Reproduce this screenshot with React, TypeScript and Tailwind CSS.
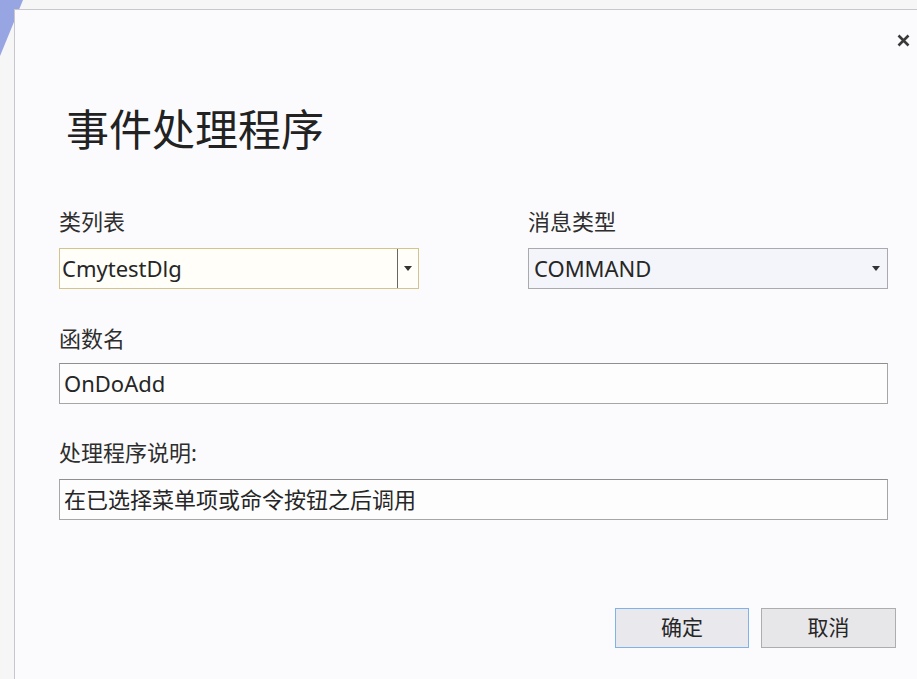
import { ReactNode } from "react";

function Caret() {
    return (
        <svg width="8" height="5" viewBox="0 0 8 5" className="block">
            <path d="M0 0 L8 0 L4 5 Z" fill="#333" />
        </svg>
    );
}

function Label({ children }: { children: ReactNode }) {
    return <div className="text-[22px] leading-[22px] text-[#2e2e2e]">{children}</div>;
}

function TextBox({ value, className = "" }: { value: string; className?: string }) {
    return (
        <div className={`flex h-[41px] w-[829px] items-center border border-[#a6a6a6] border-t-[#8f8f8f] bg-[#fdfdfd] pl-[4px] text-[22px] text-[#262626] ${className}`}>
            {value}
        </div>
    );
}

export default function App() {
    return (
        <div className="relative h-[679px] w-[917px] overflow-hidden bg-[#f6f6f7] pl-[14px] pt-[9px] font-['Noto_Sans','Noto_Sans_CJK_SC',sans-serif]">
            {/* desktop corner peeking out behind the dialog */}
            <svg className="absolute left-0 top-0" width="30" height="60" viewBox="0 0 30 60">
                <polygon points="0,0 23,0 0,56" fill="#97a5e3" />
            </svg>

            <div className="relative flex h-full w-[903px] flex-col border-l border-t border-[#c7c7cc] bg-[#fbfbfd]">
                <div className="flex justify-end pr-[7px] pt-[23px]">
                    <button className="flex h-[14px] w-[14px] items-center justify-center">
                        <svg width="13" height="13" viewBox="0 0 13 13">
                            <path d="M1.5 1.5 L11.5 11.5 M11.5 1.5 L1.5 11.5" stroke="#3a3a3a" strokeWidth="2.6" />
                        </svg>
                    </button>
                </div>

                <div className="pl-[44px]">
                    <h1 className="ml-[7px] mt-[61px] text-[43px] font-normal leading-[43px] text-[#222]">事件处理程序</h1>

                    <div className="mt-[59px] grid w-[829px] grid-cols-[360px_360px] gap-x-[109px]">
                        <div>
                            <Label>类列表</Label>
                            <div className="mt-[16px] flex h-[41px] border border-[#d3c48e] bg-[#fffef8]">
                                <div className="flex flex-1 items-center pl-[2px] text-[22px] text-[#262626]">CmytestDlg</div>
                                <div className="flex w-[21px] items-center justify-center border-l border-[#666]">
                                    <Caret />
                                </div>
                            </div>
                        </div>
                        <div>
                            <Label>消息类型</Label>
                            <div className="mt-[16px] flex h-[41px] border border-[#a9a9ae] bg-[#f4f5fa]">
                                <div className="flex flex-1 items-center pl-[5px] text-[22px] text-[#262626]">COMMAND</div>
                                <div className="flex w-[22px] items-center justify-center">
                                    <Caret />
                                </div>
                            </div>
                        </div>
                    </div>

                    <div className="mt-[38px]">
                        <Label>函数名</Label>
                    </div>
                    <TextBox value="OnDoAdd" className="mt-[14px] h-[40px]" />

                    <div className="mt-[37px]">
                        <Label>处理程序说明:</Label>
                    </div>
                    <TextBox value="在已选择菜单项或命令按钮之后调用" className="mt-[16px]" />
                </div>

                <div className="mt-[88px] flex justify-end gap-[12px] pr-[21px]">
                    <button className="h-[40px] w-[134px] border border-[#7fb3e8] bg-[#e8e8ed] text-[21px] text-[#262626]">确定</button>
                    <button className="h-[40px] w-[135px] border border-[#adadad] bg-[#e7e7e9] text-[21px] text-[#262626]">取消</button>
                </div>
            </div>
        </div>
    );
}
